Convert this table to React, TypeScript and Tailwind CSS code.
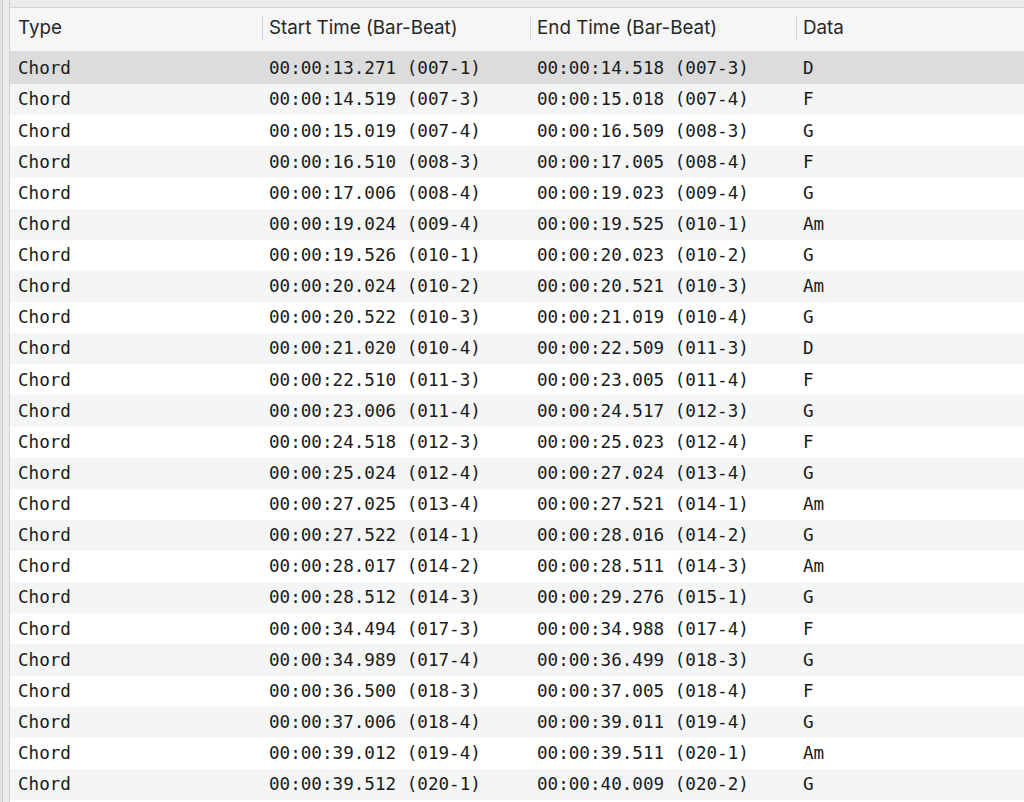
const rows: [string, string, string][] = [
  ['00:00:13.271 (007-1)', '00:00:14.518 (007-3)', 'D'],
  ['00:00:14.519 (007-3)', '00:00:15.018 (007-4)', 'F'],
  ['00:00:15.019 (007-4)', '00:00:16.509 (008-3)', 'G'],
  ['00:00:16.510 (008-3)', '00:00:17.005 (008-4)', 'F'],
  ['00:00:17.006 (008-4)', '00:00:19.023 (009-4)', 'G'],
  ['00:00:19.024 (009-4)', '00:00:19.525 (010-1)', 'Am'],
  ['00:00:19.526 (010-1)', '00:00:20.023 (010-2)', 'G'],
  ['00:00:20.024 (010-2)', '00:00:20.521 (010-3)', 'Am'],
  ['00:00:20.522 (010-3)', '00:00:21.019 (010-4)', 'G'],
  ['00:00:21.020 (010-4)', '00:00:22.509 (011-3)', 'D'],
  ['00:00:22.510 (011-3)', '00:00:23.005 (011-4)', 'F'],
  ['00:00:23.006 (011-4)', '00:00:24.517 (012-3)', 'G'],
  ['00:00:24.518 (012-3)', '00:00:25.023 (012-4)', 'F'],
  ['00:00:25.024 (012-4)', '00:00:27.024 (013-4)', 'G'],
  ['00:00:27.025 (013-4)', '00:00:27.521 (014-1)', 'Am'],
  ['00:00:27.522 (014-1)', '00:00:28.016 (014-2)', 'G'],
  ['00:00:28.017 (014-2)', '00:00:28.511 (014-3)', 'Am'],
  ['00:00:28.512 (014-3)', '00:00:29.276 (015-1)', 'G'],
  ['00:00:34.494 (017-3)', '00:00:34.988 (017-4)', 'F'],
  ['00:00:34.989 (017-4)', '00:00:36.499 (018-3)', 'G'],
  ['00:00:36.500 (018-3)', '00:00:37.005 (018-4)', 'F'],
  ['00:00:37.006 (018-4)', '00:00:39.011 (019-4)', 'G'],
  ['00:00:39.012 (019-4)', '00:00:39.511 (020-1)', 'Am'],
  ['00:00:39.512 (020-1)', '00:00:40.009 (020-2)', 'G'],
];

const COLS = 'grid grid-cols-[252px_268px_266px_1fr]';

export default function App() {
  return (
    <div className="w-[1024px] h-[802px] overflow-hidden bg-[#ececec] flex">
      {/* left frame edges */}
      <div className="w-[2px] bg-[#e4e4e4]" />
      <div className="w-px bg-[#c9c9c9]" />
      <div className="w-[6px] bg-[#ececec]" />
      <div className="flex-1 flex flex-col border-l border-[#d2d2d2]">
        <div className="h-[8px] bg-[#ececec] border-b border-[#d6d6d6] shrink-0" />
        {/* header */}
        <div
          className={`${COLS} h-[45px] pb-[3px] bg-[#f6f6f6] border-b-2 border-[#dcdcdc] text-[18.8px] text-[#262626] shrink-0`}
          style={{ fontFamily: 'Inter, "Liberation Sans", sans-serif' }}
        >
          {['Type', 'Start Time (Bar-Beat)', 'End Time (Bar-Beat)', 'Data'].map((h, i) => (
            <div key={h} className="flex items-center">
              {i > 0 && <div className="w-px h-[26px] bg-[#d4d4d4] mr-[6px]" />}
              <span className={i === 0 ? 'pl-[8px]' : ''}>{h}</span>
            </div>
          ))}
        </div>
        <div
          className="flex-1 bg-white text-[17.6px] text-[#1a1a1a]"
          style={{ fontFamily: '"DejaVu Sans Mono", monospace' }}
        >
          {rows.map(([start, end, data], i) => (
            <div
              key={start}
              className={`${COLS} h-[31.13px] items-center ${
                i === 0 ? 'bg-[#dcdcdc]' : i % 2 === 1 ? 'bg-[#f4f5f5]' : 'bg-white'
              }`}
            >
              <span className="pl-[8px]">Chord</span>
              <span className="pl-[7px] whitespace-pre">{start}</span>
              <span className="pl-[7px] whitespace-pre">{end}</span>
              <span className="pl-[7px]">{data}</span>
            </div>
          ))}
        </div>
      </div>
    </div>
  );
}
